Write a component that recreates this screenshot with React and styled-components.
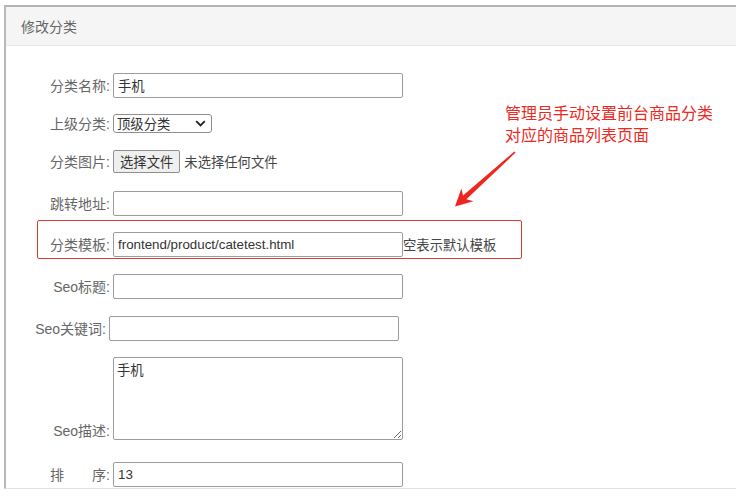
import React from 'react';
import styled, { createGlobalStyle } from 'styled-components';

const GlobalStyle = createGlobalStyle`
  html, body {
    margin: 0;
    padding: 0;
    background: #fff;
    overflow: hidden;
  }
  body {
    font-family: "Liberation Sans", "Noto Sans CJK SC", sans-serif;
  }
`;

const Page = styled.div`
  position: relative;
  width: 736px;
  height: 498px;
  padding: 5px 0 0 4px;
  box-sizing: border-box;
  overflow: hidden;
`;

const Panel = styled.div`
  width: 800px;
  height: 484px;
  box-sizing: border-box;
  border-top: 2px solid #b4b4b4;
  border-left: 2px solid #b9b9b9;
  border-bottom: 1px solid #e2e2e2;
  overflow: hidden;
`;

const Header = styled.div`
  height: 38px;
  padding-left: 15px;
  background: #f5f5f5;
  border-bottom: 1px solid #e6e6e6;
  font: 14px/38px "Noto Sans CJK SC", sans-serif;
  color: #666;
`;

const Form = styled.div`
  display: flex;
  flex-direction: column;
  padding-top: 27px;
`;

const Row = styled.div`
  display: flex;
  align-items: ${({ $bottom }) => ($bottom ? 'flex-end' : 'center')};
  min-height: 25px;
  margin-top: ${({ $gap }) => $gap}px;
`;

const Label = styled.label`
  flex: none;
  width: ${({ $w }) => $w || 104}px;
  text-align: right;
  white-space: nowrap;
  font: 14px/18px "Liberation Sans", "Noto Sans CJK SC", sans-serif;
  color: #666;
`;

const Field = styled.input`
  box-sizing: border-box;
  width: 290px;
  height: 25px;
  margin: 0 0 0 3px;
  padding: 0 4px;
  border: 1px solid #9c9c9c;
  border-radius: 2px;
  font: 13.33px "Liberation Sans", "Noto Sans CJK SC", sans-serif;
  color: #333;
  outline: none;
`;

const SelectBox = styled.div`
  position: relative;
  margin-left: 3px;
  display: flex;
`;

const Select = styled.select`
  box-sizing: border-box;
  width: 99px;
  height: 19px;
  padding: 0 0 0 3px;
  border: 1px solid #8f8f8f;
  border-radius: 3px;
  background: #fff;
  appearance: none;
  font: 13.33px/17px "Noto Sans CJK SC", sans-serif;
  color: #333;
  outline: none;
`;

const Chevron = styled.svg`
  position: absolute;
  right: 6px;
  top: 6px;
  pointer-events: none;
`;

const FileButton = styled.button`
  box-sizing: border-box;
  height: 23px;
  margin-left: 3px;
  padding: 0 6px;
  border: 1px solid #8f8f8f;
  border-radius: 2px;
  background: #efefef;
  font: 13.33px "Noto Sans CJK SC", sans-serif;
  color: #333;
`;

const Hint = styled.span`
  margin-left: ${({ $ml }) => $ml}px;
  font: 13.33px/18px "Noto Sans CJK SC", sans-serif;
  color: #444;
  white-space: nowrap;
`;

const TextArea = styled.textarea`
  box-sizing: border-box;
  width: 290px;
  height: 83px;
  margin: 0 0 0 3px;
  padding: 2px 3px;
  border: 1px solid #9c9c9c;
  border-radius: 2px;
  font: 13.33px "Noto Sans CJK SC", sans-serif;
  color: #333;
  outline: none;
  resize: both;
`;

const Highlight = styled.div`
  position: absolute;
  left: 37px;
  top: 220px;
  width: 485px;
  height: 39px;
  box-sizing: border-box;
  border: 1px solid #e0392f;
  border-radius: 2px;
  pointer-events: none;
`;

const Note = styled.div`
  position: absolute;
  left: 505px;
  top: 101px;
  font: 16px/22px "Noto Sans CJK SC", sans-serif;
  color: #ec2a22;
  white-space: nowrap;
`;

const Arrow = styled.svg`
  position: absolute;
  left: 0;
  top: 0;
  pointer-events: none;
`;

export default function App() {
  return (
    <>
      <GlobalStyle />
      <Page>
        <Panel>
          <Header>修改分类</Header>
          <Form>
            <Row $gap={0}>
              <Label>分类名称:</Label>
              <Field defaultValue="手机" />
            </Row>
            <Row $gap={13}>
              <Label>上级分类:</Label>
              <SelectBox>
                <Select defaultValue="0">
                  <option value="0">顶级分类</option>
                </Select>
                <Chevron width="11" height="7" viewBox="0 0 11 7">
                  <path d="M1.2 1.2 5.5 5.4 9.8 1.2" fill="none" stroke="#222" strokeWidth="1.8" />
                </Chevron>
              </SelectBox>
            </Row>
            <Row $gap={13}>
              <Label>分类图片:</Label>
              <FileButton type="button">选择文件</FileButton>
              <Hint $ml={4}>未选择任何文件</Hint>
            </Row>
            <Row $gap={17}>
              <Label>跳转地址:</Label>
              <Field />
            </Row>
            <Row $gap={16}>
              <Label>分类模板:</Label>
              <Field defaultValue="frontend/product/catetest.html" />
              <Hint $ml={0}>空表示默认模板</Hint>
            </Row>
            <Row $gap={17}>
              <Label>Seo标题:</Label>
              <Field />
            </Row>
            <Row $gap={17}>
              <Label $w={100}>Seo关键词:</Label>
              <Field />
            </Row>
            <Row $gap={16} $bottom>
              <Label>Seo描述:</Label>
              <TextArea defaultValue="手机" />
            </Row>
            <Row $gap={22}>
              <Label>排&emsp;&emsp;序:</Label>
              <Field defaultValue="13" />
            </Row>
          </Form>
        </Panel>

        <Highlight />
        <Note>
          管理员手动设置前台商品分类
          <br />
          对应的商品列表页面
        </Note>
        <Arrow width="736" height="498" viewBox="0 0 736 498">
          <polygon
            points="515.6,152.6 466.4,199.3 473.5,201.2 455,206.5 461.4,188.4 463,195.6 514.4,151.4"
            fill="#f0261e"
          />
        </Arrow>
      </Page>
    </>
  );
}
